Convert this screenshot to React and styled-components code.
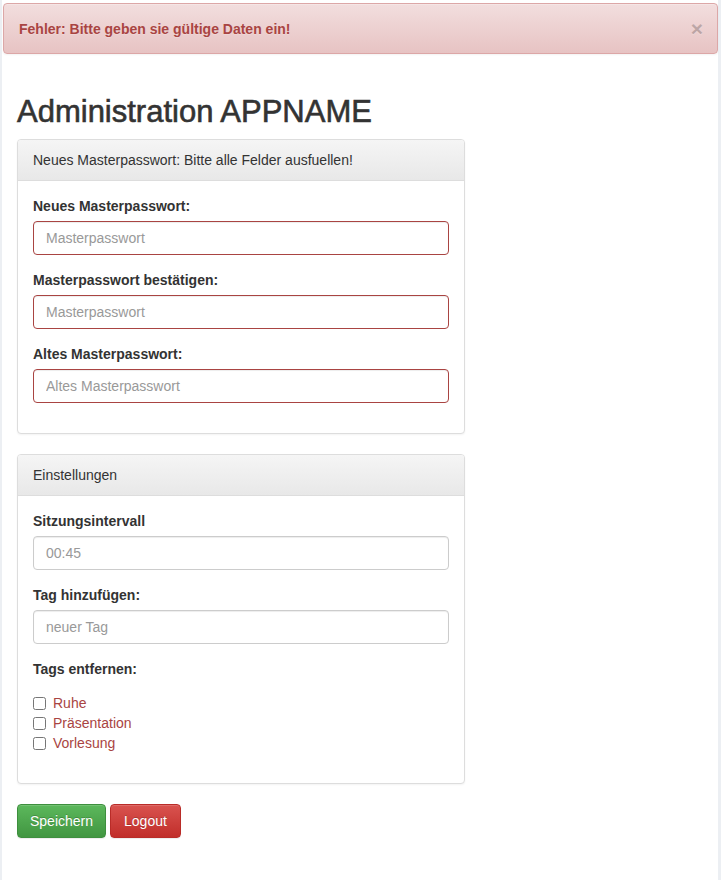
import React from "react";
import styled, { createGlobalStyle } from "styled-components";

/* ---------- global ---------- */

const GlobalStyle = createGlobalStyle`
  html, body {
    margin: 0;
    padding: 0;
    background: #eceff3;
  }
  body {
    font-family: "Liberation Sans", Arial, sans-serif;
    font-size: 14px;
    line-height: 20px;
    color: #333;
  }
  * { box-sizing: border-box; }
`;

/* ---------- styled components ---------- */

const Page = styled.div`
  margin: 0 3px 0 2px;
  padding-top: 3px;
  min-height: 880px;
  background: #fff;
`;

const Alert = styled.div`
  display: flex;
  align-items: center;
  justify-content: space-between;
  margin-left: 1px;
  padding: 14px 35px 14px 15px;
  border: 1px solid #dca7a7;
  border-radius: 4px;
  background: linear-gradient(to bottom, #f2dede 0%, #e7c3c3 100%);
  box-shadow: inset 0 1px 0 rgba(255, 255, 255, 0.25), 0 1px 2px rgba(0, 0, 0, 0.05);
  color: #a94442;
  font-weight: bold;
  text-shadow: 0 1px 0 rgba(255, 255, 255, 0.2);
`;

const Close = styled.button`
  margin-right: -21px;
  padding: 0;
  border: 0;
  background: transparent;
  font-family: "Liberation Sans", Arial, sans-serif;
  font-size: 21px;
  font-weight: bold;
  line-height: 1;
  color: #000;
  opacity: 0.2;
  text-shadow: 0 1px 0 #fff;
  cursor: pointer;
`;

const Container = styled.div`
  padding: 0 15px;
`;

const Title = styled.h1`
  margin: 41px 0 10px;
  font-size: 31px;
  font-weight: 500;
  line-height: 1.1;
  color: #333;
  -webkit-text-stroke: 0.6px #333;
`;

const Panel = styled.section`
  width: 448px;
  margin-bottom: 20px;
  border: 1px solid #ddd;
  border-radius: 4px;
  background: #fff;
  box-shadow: 0 1px 2px rgba(0, 0, 0, 0.05);
`;

const PanelHeading = styled.div`
  padding: 10px 15px;
  border-bottom: 1px solid #ddd;
  border-radius: 3px 3px 0 0;
  background: linear-gradient(to bottom, #f5f5f5 0%, #e8e8e8 100%);
  color: #333;
`;

const PanelBody = styled.div`
  padding: 15px;
`;

const FormGroup = styled.div`
  margin-bottom: 15px;
`;

const Label = styled.label`
  display: block;
  margin-bottom: 5px;
  font-weight: bold;
`;

const Input = styled.input`
  display: block;
  width: 100%;
  height: 34px;
  padding: 6px 12px;
  border: 1px solid ${({ $error }) => ($error ? "#a94442" : "#ccc")};
  border-radius: 4px;
  background: #fff;
  box-shadow: inset 0 1px 1px rgba(0, 0, 0, 0.075);
  font-family: "Liberation Sans", Arial, sans-serif;
  font-size: 14px;
  line-height: 20px;
  color: #555;
  outline: none;

  &::placeholder {
    color: #999;
  }
`;

const TagList = styled.div`
  margin-top: 14px;
`;

const CheckRow = styled.label`
  display: flex;
  align-items: center;
  height: 20px;
  color: #a94442;
`;

const Check = styled.input`
  width: 13px;
  height: 13px;
  margin: 0 7px 0 0;
`;

const Actions = styled.div`
  display: flex;
  gap: 4px;
`;

const Button = styled.button`
  height: 34px;
  padding: 6px ${({ $variant }) => ($variant === "danger" ? "13px" : "12px")};
  border: 1px solid ${({ $variant }) => ($variant === "danger" ? "#b92c28" : "#3e8f3e")};
  border-radius: 4px;
  background: ${({ $variant }) =>
    $variant === "danger"
      ? "linear-gradient(to bottom, #d9534f 0%, #c12e2a 100%)"
      : "linear-gradient(to bottom, #5cb85c 0%, #419641 100%)"};
  box-shadow: inset 0 1px 0 rgba(255, 255, 255, 0.15), 0 1px 1px rgba(0, 0, 0, 0.075);
  color: #fff;
  font-family: "Liberation Sans", Arial, sans-serif;
  font-size: 14px;
  line-height: 20px;
  text-shadow: 0 -1px 0 rgba(0, 0, 0, 0.2);
  cursor: pointer;
`;

/* ---------- component ---------- */

const tags = ["Ruhe", "Präsentation", "Vorlesung"];

const App = () => {
  return (
    <>
      <GlobalStyle />
      <Page>
        <Alert>
          <span>Fehler: Bitte geben sie gültige Daten ein!</span>
          <Close type="button">×</Close>
        </Alert>

        <Container>
          <Title>Administration APPNAME</Title>

          {/* MASTERPASSWORT */}
          <Panel>
            <PanelHeading>Neues Masterpasswort: Bitte alle Felder ausfuellen!</PanelHeading>
            <PanelBody>
              <FormGroup>
                <Label>Neues Masterpasswort:</Label>
                <Input $error type="password" placeholder="Masterpasswort" />
              </FormGroup>
              <FormGroup>
                <Label>Masterpasswort bestätigen:</Label>
                <Input $error type="password" placeholder="Masterpasswort" />
              </FormGroup>
              <FormGroup>
                <Label>Altes Masterpasswort:</Label>
                <Input $error type="password" placeholder="Altes Masterpasswort" />
              </FormGroup>
            </PanelBody>
          </Panel>

          {/* EINSTELLUNGEN */}
          <Panel>
            <PanelHeading>Einstellungen</PanelHeading>
            <PanelBody>
              <FormGroup>
                <Label>Sitzungsintervall</Label>
                <Input type="text" placeholder="00:45" />
              </FormGroup>
              <FormGroup>
                <Label>Tag hinzufügen:</Label>
                <Input type="text" placeholder="neuer Tag" />
              </FormGroup>
              <FormGroup>
                <Label>Tags entfernen:</Label>
                <TagList>
                  {tags.map((tag) => (
                    <CheckRow key={tag}>
                      <Check type="checkbox" />
                      {tag}
                    </CheckRow>
                  ))}
                </TagList>
              </FormGroup>
            </PanelBody>
          </Panel>

          <Actions>
            <Button $variant="success">Speichern</Button>
            <Button $variant="danger">Logout</Button>
          </Actions>
        </Container>
      </Page>
    </>
  );
};

export default App;
